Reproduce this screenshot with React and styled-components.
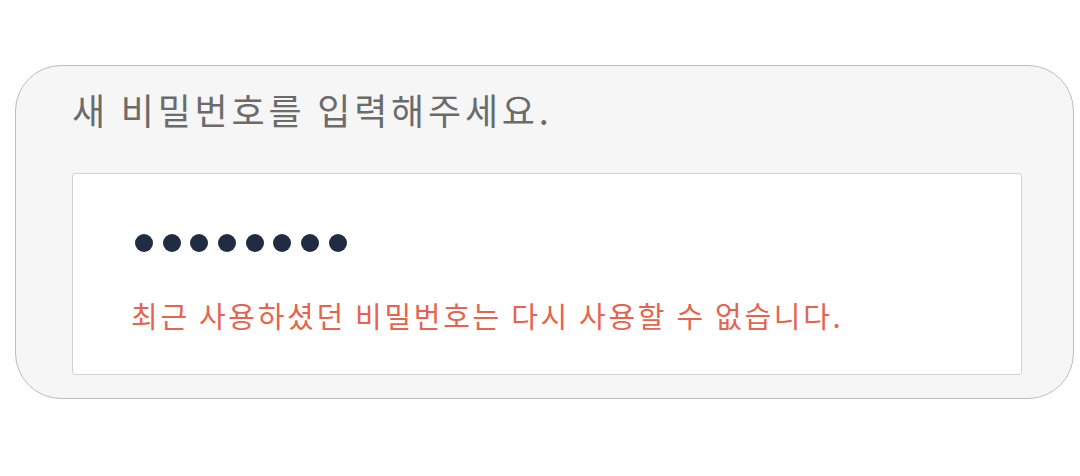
import React from "react";
import styled, { createGlobalStyle } from "styled-components";

const GlobalStyle = createGlobalStyle`
  html, body {
    margin: 0;
    padding: 0;
    background: #ffffff;
  }
  body {
    font-family: "Noto Sans CJK KR", "Noto Sans", sans-serif;
  }
`;

const Page = styled.div`
  width: 1080px;
  height: 476px;
  padding: 65px 0 0 15px;
  box-sizing: border-box;
`;

const Card = styled.div`
  width: 1059px;
  height: 334px;
  box-sizing: border-box;
  border: 1.5px solid #bdbdbd;
  border-radius: 46px;
  background: #f6f6f6;
  padding: 17px 0 0 56px;
  display: flex;
  flex-direction: column;
`;

const Title = styled.div`
  font-size: 36px;
  line-height: 52px;
  color: #6b6b6b;
  letter-spacing: 3.8px;
  height: 90px;
`;

const Field = styled.div`
  width: 950px;
  height: 202px;
  box-sizing: border-box;
  border: 1.5px solid #d2d2d2;
  border-radius: 3px;
  background: #ffffff;
  padding: 59px 0 0 62px;
  display: flex;
  flex-direction: column;
`;

const Dots = styled.div`
  display: flex;
  gap: 9.7px;
  height: 20px;
  align-items: center;
`;

const Dot = styled.span`
  width: 18px;
  height: 18px;
  border-radius: 50%;
  background: #1f2c42;
`;

const ErrorText = styled.div`
  margin-top: 42px;
  margin-left: -4px;
  font-size: 29px;
  line-height: 40px;
  letter-spacing: 2.7px;
  color: #e5644f;
`;

export default function App() {
  return (
    <>
      <GlobalStyle />
      <Page>
        <Card>
          <Title>새 비밀번호를 입력해주세요.</Title>
          <Field>
            <Dots>
              {Array.from({ length: 8 }).map((_, i) => (
                <Dot key={i} />
              ))}
            </Dots>
            <ErrorText>최근 사용하셨던 비밀번호는 다시 사용할 수 없습니다.</ErrorText>
          </Field>
        </Card>
      </Page>
    </>
  );
}
